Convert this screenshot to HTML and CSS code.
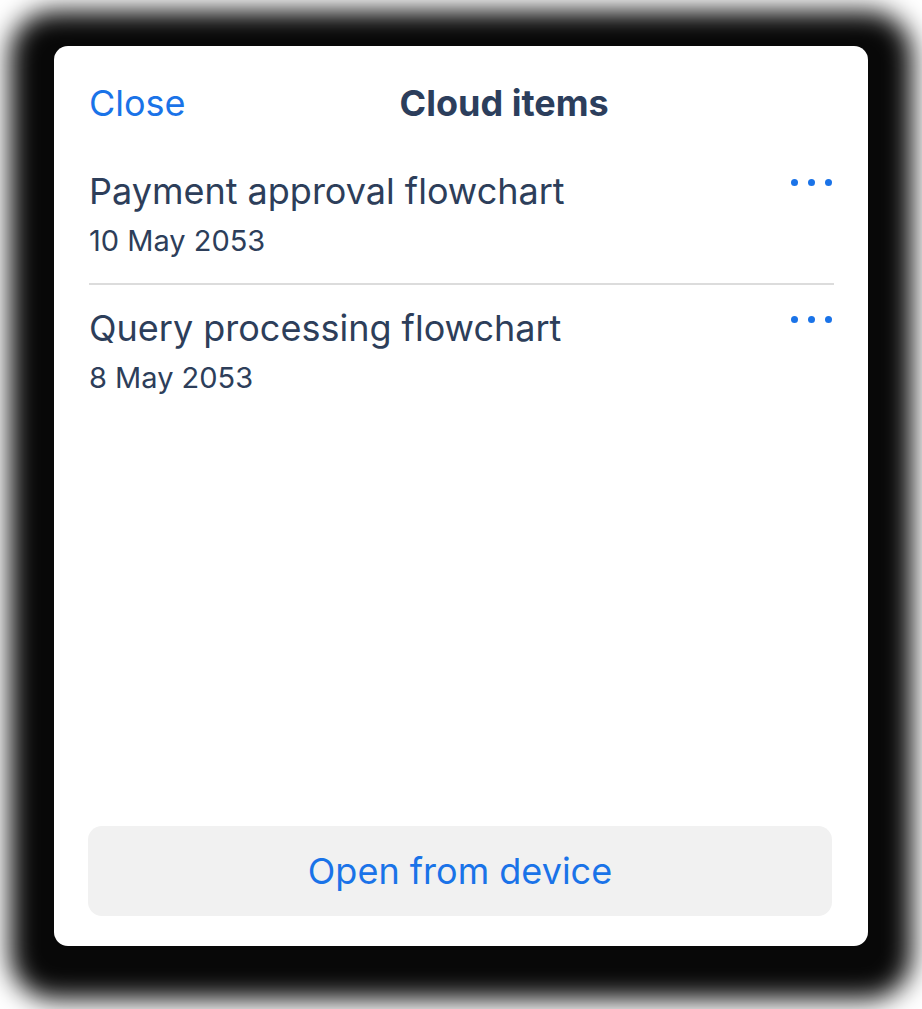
FILE: index.html
```html
<!DOCTYPE html>
<html>
<head>
<meta charset="utf-8">
<link rel="stylesheet" href="styles.css">
</head>
<body>
<div class="stage">
  <div class="card">
    <div class="header">
      <span class="close">Close</span>
      <span class="title">Cloud items</span>
    </div>
    <div class="list">
      <div class="item">
        <div class="info">
          <div class="name">Payment approval flowchart</div>
          <div class="date">10 May 2053</div>
        </div>
        <div class="more"><span></span><span></span><span></span></div>
      </div>
      <div class="item">
        <div class="info">
          <div class="name">Query processing flowchart</div>
          <div class="date">8 May 2053</div>
        </div>
        <div class="more"><span></span><span></span><span></span></div>
      </div>
    </div>
    <div class="button">Open from device</div>
  </div>
</div>
</body>
</html>
```
FILE: styles.css
```css
html, body {
  margin: 0;
  padding: 0;
  background: #ffffff;
}
body {
  font-family: Inter, "Noto Sans", sans-serif;
  width: 922px;
  height: 1009px;
  overflow: hidden;
}
.stage {
  padding: 46px 54px;
}
.card {
  width: 814px;
  height: 900px;
  box-sizing: border-box;
  background: #fff;
  border-radius: 14px;
  box-shadow: 0 9px 26px 44px rgba(0, 0, 0, 0.97);
  padding: 34px 34px 30px 35px;
  display: flex;
  flex-direction: column;
}
.header {
  display: flex;
  align-items: center;
  height: 46px;
  gap: 214px;
}
.close {
  color: #1a73e8;
  font-size: 36px;
}
.title {
  color: #2c3e5c;
  font-size: 36px;
  font-weight: 700;
}
.list {
  flex: 1;
  margin-top: 43px;
}
.item {
  display: flex;
  justify-content: space-between;
  align-items: flex-start;
  padding-bottom: 22px;
}
.item + .item {
  border-top: 2px solid #dcdcdc;
  padding-top: 21px;
}
.name {
  color: #2d3e5a;
  font-size: 36px;
  line-height: 44px;
}
.date {
  color: #2d3e5a;
  font-size: 29px;
  line-height: 40px;
  margin-top: 8px;
}
.more {
  display: flex;
  gap: 10px;
  padding-top: 10px;
  padding-right: 2px;
}
.more span {
  width: 7px;
  height: 7px;
  border-radius: 50%;
  background: #1a73e8;
}
.button {
  height: 90px;
  width: 744px;
  margin-left: -1px;
  background: #f1f1f1;
  border-radius: 14px;
  display: flex;
  align-items: center;
  justify-content: center;
  color: #1a73e8;
  font-size: 36px;
}
```
